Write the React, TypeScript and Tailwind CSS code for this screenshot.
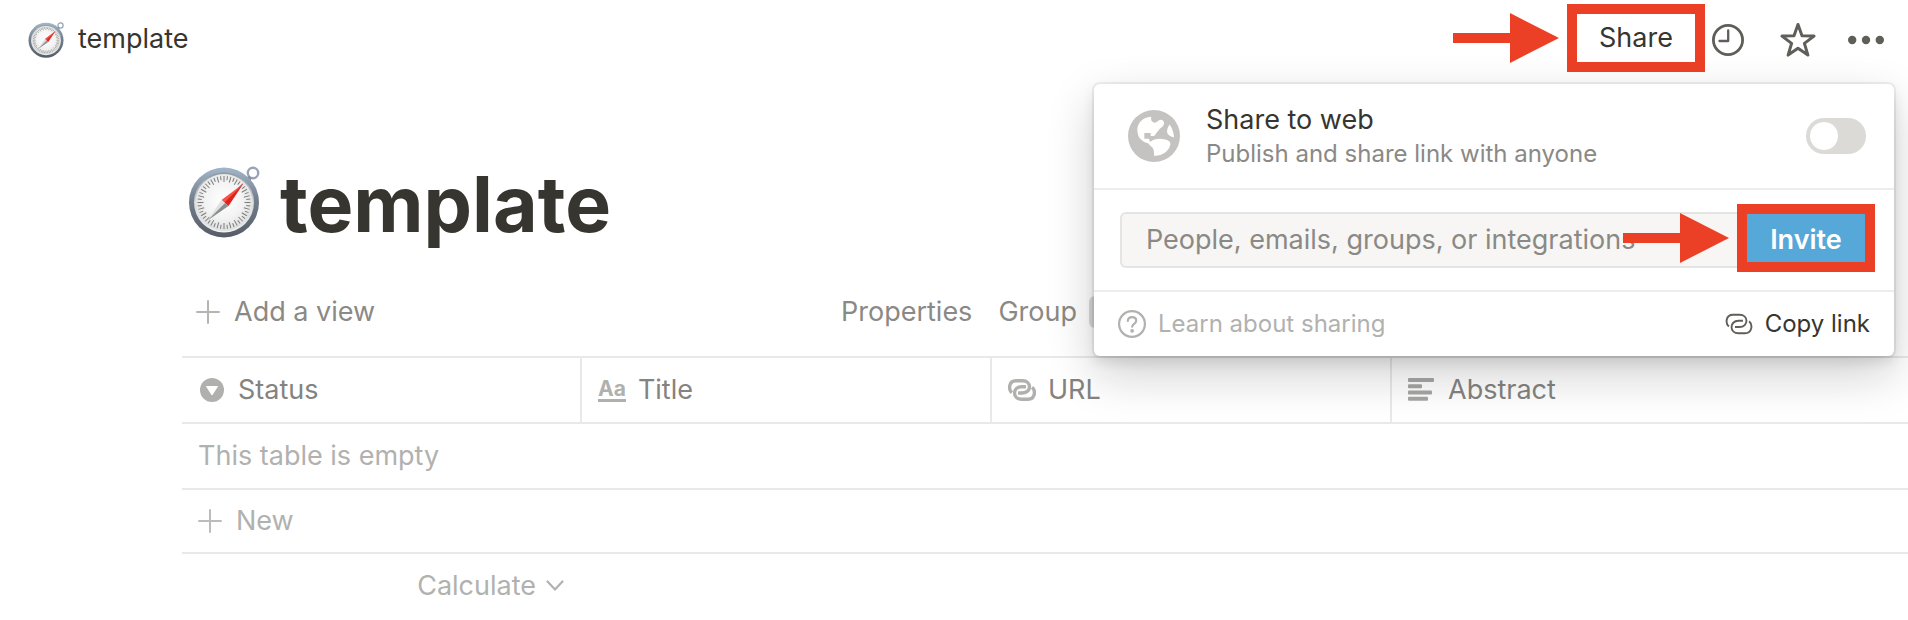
import React from "react";

function Compass({ className }: { className: string }) {
  const ticks = Array.from({ length: 48 }, (_, i) => i * 7.5);
  return (
    <svg viewBox="0 0 72 72" className={className} aria-hidden="true">
      <defs>
        <linearGradient id="rim" x1="0" y1="0" x2="0" y2="1">
          <stop offset="0" stopColor="#a3b6c9" />
          <stop offset="0.45" stopColor="#74808f" />
          <stop offset="1" stopColor="#565c65" />
        </linearGradient>
        <linearGradient id="bezel" x1="0" y1="0" x2="0" y2="1">
          <stop offset="0" stopColor="#8f989f" />
          <stop offset="0.5" stopColor="#d5d8da" />
          <stop offset="1" stopColor="#f1f2f2" />
        </linearGradient>
        <radialGradient id="dial" cx="0.5" cy="0.45" r="0.55">
          <stop offset="0" stopColor="#ffffff" />
          <stop offset="0.6" stopColor="#f3f3f3" />
          <stop offset="1" stopColor="#dedfe0" />
        </radialGradient>
      </defs>
      <circle cx="65" cy="7" r="5.200" fill="none" stroke="#99a3b3" strokeWidth="2.400" />
      <path d="M57 12l4-2 2.500 2.500-2.500 4z" fill="#7e8b9b" />
      <circle cx="36" cy="36.500" r="35" fill="url(#rim)" />
      <circle cx="36" cy="36.500" r="30" fill="url(#bezel)" />
      <circle cx="36" cy="36.500" r="28.500" fill="url(#dial)" />
      {ticks.map((a, i) => (
        <line
          key={a}
          x1="36"
          x2="36"
          y1="10"
          y2={i % 2 ? 14 : 16}
          stroke="#7c7c7c"
          strokeWidth="1"
          transform={`rotate(${a} 36 36.500)`}
        />
      ))}
      <path d="M55.500 17.500L33.500 34l3.500 3z" fill="#f9504a" />
      <path d="M55.500 17.500L40.500 40l-4-3.500z" fill="#e0221b" />
      <path d="M19.500 54.500L33.500 34l3.500 3z" fill="#dedfdf" />
      <path d="M19.500 54.500L40.500 40l-3.500-3z" fill="#8b8e90" />
    </svg>
  );
}

function Plus({ className }: { className: string }) {
  return (
    <svg viewBox="0 0 24 24" className={className} fill="none" stroke="currentColor" strokeWidth="2" strokeLinecap="round" aria-hidden="true">
      <path d="M12 1v22M1 12h22" />
    </svg>
  );
}

function LinkIcon({ className, weight }: { className: string; weight: number }) {
  return (
    <svg viewBox="0 0 28 22" className={className} fill="none" stroke="currentColor" strokeWidth={weight} aria-hidden="true">
      <path d="M3.900 13.600C0.200 10.500 0.600 1.700 8 1.700h6.500c9.300 0 9.300 12.300 0 12.300H10" />
      <path d="M24.100 8.200c3.700 3.100 3.300 12.100-4.100 12.100h-6.500c-9.300 0-9.300-12.500 0-12.500H18" />
    </svg>
  );
}

function Arrow() {
  return (
    <svg viewBox="0 0 106 50" className="h-[50px] w-[106px] fill-[#ec4026]" aria-hidden="true">
      <path d="M0 20h57V0l49 25-49 25V30H0z" />
    </svg>
  );
}

const cell = "h-[66px] border-b-2 border-[#e9e9e8] p-0 text-left font-normal";

export default function App() {
  return (
    <div className="relative overflow-x-clip bg-white pb-6 font-[Inter,'Liberation_Sans',sans-serif] text-[27px] leading-8 text-[#37352f]">
      <header className="flex h-20 items-center justify-between pr-6 pl-7">
        <a href="#template" className="flex items-center gap-3.5">
          <Compass className="size-9" />
          <span className="pb-0.5">template</span>
        </a>
        <div className="flex items-center">
          <div className="mb-1 flex items-center gap-2">
            <Arrow />
            <button type="button" className="h-[68px] w-[138px] border-10 border-[#ec4026]">
              Share
            </button>
          </div>
          <button type="button" aria-label="Updates" className="ml-[7px] text-[#5f5e59]">
            <svg viewBox="0 0 32 32" className="block size-8" fill="none" stroke="currentColor" strokeWidth="2.800">
              <circle cx="16" cy="16" r="14.600" />
              <path d="M16.200 6.500v10.500H7.500" strokeWidth="2.300" strokeLinecap="round" strokeLinejoin="round" />
            </svg>
          </button>
          <button type="button" aria-label="Favorite" className="ml-9 text-[#5f5e59]">
            <svg viewBox="0 0 36 36" className="block size-9" fill="none" stroke="currentColor" strokeWidth="3" strokeLinejoin="round">
              <path d="M18 2.500l4 11.300 12 .3-9.600 7.300 3.500 11.700L18 26.200 8.100 33.100l3.500-11.700L2 14.100l12-.3z" />
            </svg>
          </button>
          <button type="button" aria-label="More" className="ml-8 text-[#5f5e59]">
            <svg viewBox="0 0 36 36" className="block size-9" fill="currentColor">
              <circle cx="4.200" cy="18" r="4.200" />
              <circle cx="18" cy="18" r="4.200" />
              <circle cx="31.800" cy="18" r="4.200" />
            </svg>
          </button>
        </div>
      </header>

      <main className="pl-[182px]">
        <div className="flex items-center gap-5 pt-[72px] pl-1.5">
          <Compass className="size-[72px]" />
          <h1 className="pt-1 text-[77px] leading-[96px] font-bold">template</h1>
        </div>

        <div className="mt-11 flex h-8 items-center text-[#8a8985]">
          <button type="button" className="ml-3.5 flex w-[645px] items-center gap-3.5">
            <Plus className="size-6 text-[#b4b4b1]" />
            Add a view
          </button>
          <button type="button">Properties</button>
          <button type="button" className="ml-[26px]">Group</button>
          <span className="ml-3 h-8 w-14 rounded-md bg-[#d9d9d7]" />
        </div>

        <table className="mt-7 w-full table-fixed border-separate border-spacing-0 border-t-2 border-[#e9e9e8] text-[#b1b1af]">
          <colgroup>
            <col className="w-[400px]" />
            <col className="w-[410px]" />
            <col className="w-[400px]" />
            <col />
          </colgroup>
          <thead className="text-[#84837f]">
            <tr>
              <th scope="col" className={cell + " border-r-2"}>
                <span className="flex items-center gap-3.5 pl-[18px]">
                  <svg viewBox="0 0 24 24" className="size-6" aria-hidden="true">
                    <circle cx="12" cy="12" r="12" fill="#b0b0ad" />
                    <path d="M6.500 8.500h11L12 17z" fill="#fff" stroke="#fff" strokeLinejoin="round" />
                  </svg>
                  Status
                </span>
              </th>
              <th scope="col" className={cell + " border-r-2"}>
                <span className="flex items-center gap-3 pl-4">
                  <span className="border-b-3 border-[#b0b0ad] text-[21px] leading-5 font-bold text-[#b0b0ad]" aria-hidden="true">Aa</span>
                  Title
                </span>
              </th>
              <th scope="col" className={cell + " border-r-2"}>
                <span className="flex items-center gap-3 pl-4">
                  <LinkIcon weight={3.4} className="h-[22px] w-7 text-[#b0b0ad]" />
                  URL
                </span>
              </th>
              <th scope="col" className={cell}>
                <span className="flex items-center gap-3.5 pl-4">
                  <svg viewBox="0 0 26 24" className="h-6 w-[26px] fill-[#a6a6a4]" aria-hidden="true">
                    <rect y="0" width="26" height="4" rx="1" />
                    <rect y="6.300" width="14" height="4" rx="1" />
                    <rect y="12.500" width="24" height="4" rx="1" />
                    <rect y="18.700" width="20" height="4" rx="1" />
                  </svg>
                  Abstract
                </span>
              </th>
            </tr>
          </thead>
          <tbody>
            <tr>
              <td colSpan={4} className={cell + " pl-4"}>This table is empty</td>
            </tr>
            <tr>
              <td colSpan={4} className="h-16 border-b-2 border-[#e9e9e8] p-0">
                <button type="button" className="ml-4 flex items-center gap-3.5">
                  <Plus className="size-6 text-[#bcbcba]" />
                  New
                </button>
              </td>
            </tr>
          </tbody>
          <tfoot>
            <tr>
              <td className="h-16 p-0">
                <button type="button" className="ml-auto flex items-center gap-2.5 pr-[18px]">
                  Calculate
                  <svg viewBox="0 0 18 12" className="h-3 w-[18px]" fill="none" stroke="currentColor" strokeWidth="2.200" strokeLinecap="round" aria-hidden="true">
                    <path d="M1.500 1.500L9 9.500l7.500-8" />
                  </svg>
                </button>
              </td>
              <td colSpan={3} />
            </tr>
          </tfoot>
        </table>
      </main>

      <section
        aria-label="Share"
        className="absolute top-[84px] right-3.5 w-[800px] rounded-md bg-white shadow-[0_0_0_2px_rgba(15,15,15,0.06),0_6px_12px_rgba(15,15,15,0.1),0_18px_48px_rgba(15,15,15,0.2)]"
      >
        <label className="flex h-26 items-center pr-7 pl-[34px]">
          <svg viewBox="0 0 52 52" className="size-[52px]" aria-hidden="true">
            <circle cx="26" cy="26" r="26" fill="#c4c3c1" />
            <g fill="#fff">
              <path d="M9.300 21C9 12.500 15 7.200 23 6.700L23.300 10.500Q26 14.500 30 11Q34 8.300 36 12Q36.500 16 32.500 18L28 23.500Q27 26 25.500 26H22.700V23H16.300V28.700H21L22 32Q26 28.700 32 28.700Q42 29 42.500 34Q40 45 26.300 46L25.700 40Q25 37 22 35.500L20.500 33.500Q10 31 9.300 21z" />
              <path d="M41.500 14.500Q45.500 19.500 46 27.500Q39.500 26 39 21.500Q39.300 17.500 41.500 14.500z" />
            </g>
          </svg>
          <span className="ml-[26px] flex flex-1 flex-col pt-1">
            <span>Share to web</span>
            <span className="text-2xl leading-9 text-[#8a8985]">Publish and share link with anyone</span>
          </span>
          <input
            type="checkbox"
            role="switch"
            className="flex h-9 w-15 appearance-none items-center rounded-full bg-[#dbdad7] px-1 before:size-7 before:rounded-full before:bg-white before:content-['']"
          />
        </label>
        <form className="flex h-[104px] items-center border-y-2 border-[#ededec] pr-[19px] pl-[26px]">
          <div className="relative flex h-14 flex-1 items-center rounded-l-md border-2 border-r-0 border-[#e4e4e2] bg-[#f7f6f5]">
            <input
              type="text"
              aria-label="People, emails, groups, or integrations"
              placeholder="People, emails, groups, or integrations"
              className="w-full bg-transparent pl-6 outline-none placeholder:text-[#8a8985]"
            />
            <div className="pointer-events-none absolute right-2 pb-1">
              <Arrow />
            </div>
          </div>
          <button type="button" className="mb-1 h-[68px] w-[138px] border-10 border-[#ec4026] bg-[#56a8d9] pt-1 font-semibold text-white">
            Invite
          </button>
        </form>
        <footer className="flex h-16 items-center justify-between pr-6 pl-6 text-2xl">
          <a href="#help" className="flex items-center gap-3 text-[#b1b1af]">
            <svg viewBox="0 0 28 28" className="size-7" fill="none" stroke="currentColor" strokeWidth="2.200" strokeLinecap="round" aria-hidden="true">
              <circle cx="14" cy="14" r="12.900" />
              <path d="M9.800 10.800c.3-2.300 2-3.600 4.200-3.600 2.400 0 4.200 1.400 4.200 3.500 0 3-4 3.200-4 6" />
              <circle cx="14.100" cy="20.800" r="0.800" fill="currentColor" />
            </svg>
            Learn about sharing
          </a>
          <button type="button" className="flex items-center gap-3">
            <LinkIcon weight={1.9} className="h-[22px] w-7 text-[#5f5e59]" />
            Copy link
          </button>
        </footer>
      </section>
    </div>
  );
}
